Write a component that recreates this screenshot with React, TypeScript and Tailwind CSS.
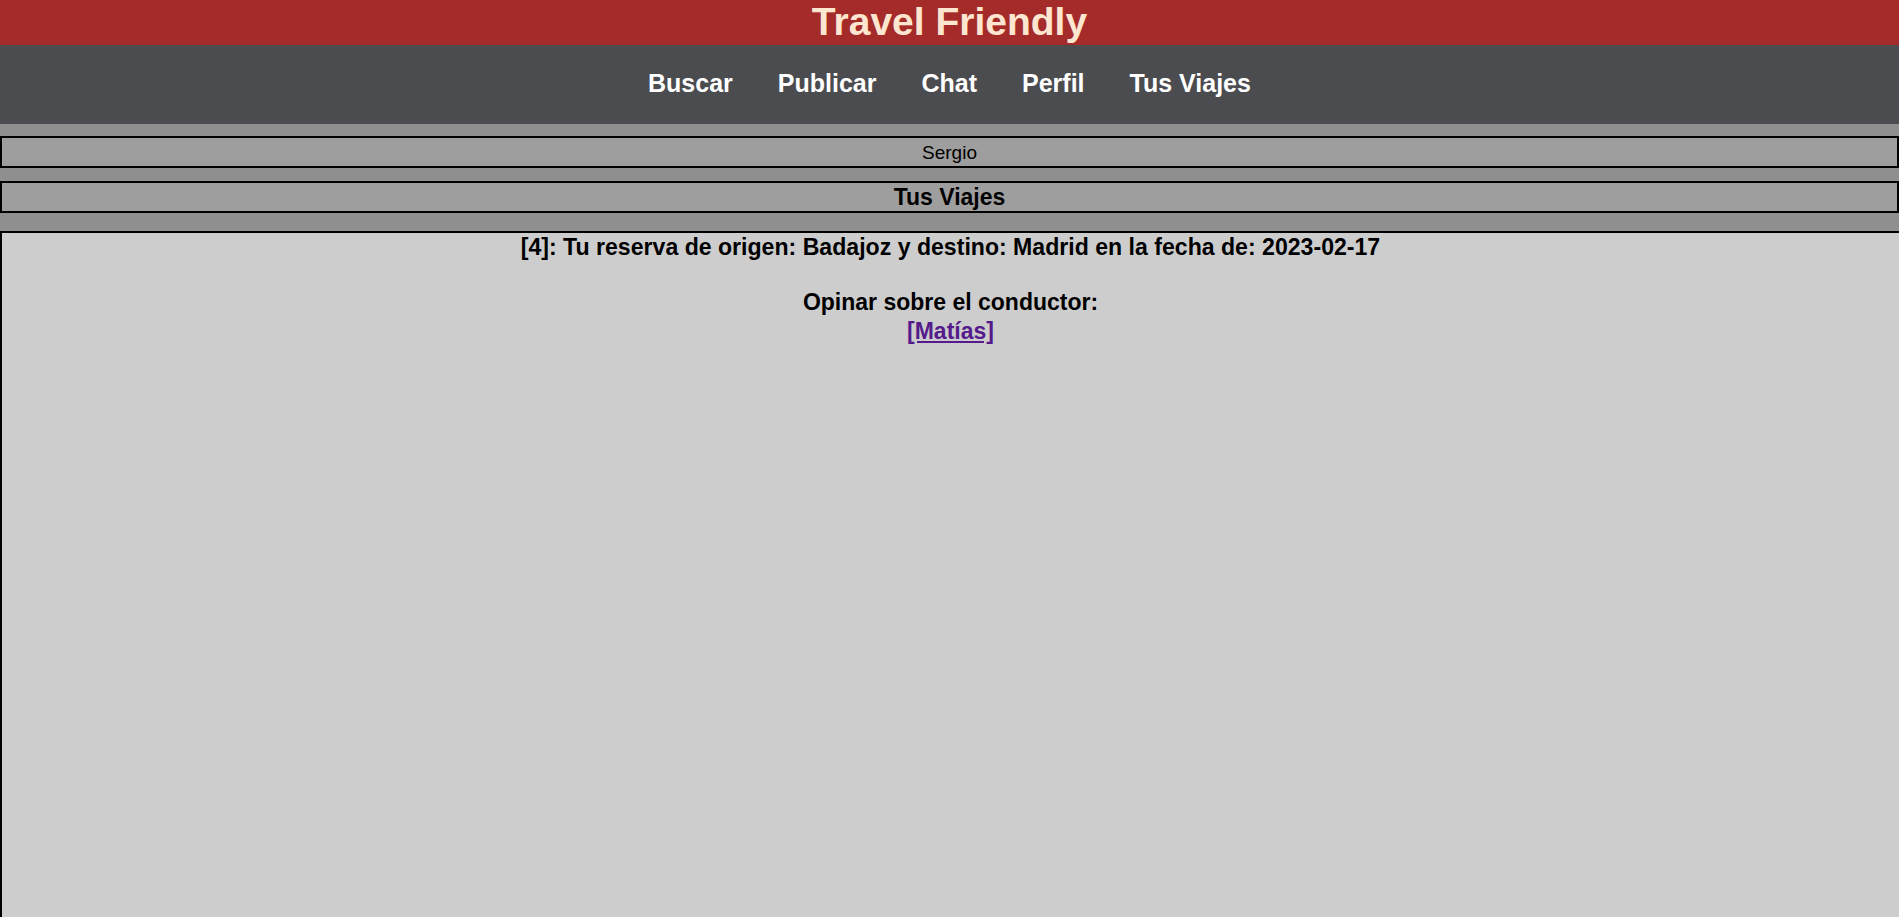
export default function App() {
  const links = ["Buscar", "Publicar", "Chat", "Perfil", "Tus Viajes"];

  return (
    <div className="h-[917px] flex flex-col overflow-hidden bg-[#8f8f8f] font-['Liberation_Sans',Arial,sans-serif] text-black">
      {/* Header */}
      <header className="h-[45px] bg-[#a52a2a] flex items-center justify-center pb-[2px]">
        <h1 className="text-[39px] leading-[43px] font-bold text-[#fde6cf]">Travel Friendly</h1>
      </header>

      {/* Nav */}
      <nav className="h-[79px] bg-[#4b4c50] flex items-center justify-center gap-[45px] pb-[2px]">
        {links.map((l) => (
          <a key={l} href="#" className="text-[25px] font-bold text-white no-underline">
            {l}
          </a>
        ))}
      </nav>

      <div className="mt-[12px] h-[32px] border-2 border-black bg-[#9e9e9e] flex items-center justify-center pt-[2px]">
        <span className="text-[19px]">Sergio</span>
      </div>

      <div className="mt-[13px] h-[32px] border-2 border-black bg-[#9e9e9e] flex items-center justify-center">
        <h2 className="text-[23px] font-bold">Tus Viajes</h2>
      </div>

      {/* Reservas */}
      <div className="mt-[18px] flex-1 border-l-2 border-t-2 border-black bg-[#cdcdcd] pt-[1px] text-center text-[23px] font-bold leading-[27px]">
        <p className="text-[23.1px]">[4]: Tu reserva de origen: Badajoz y destino: Madrid en la fecha de: 2023-02-17</p>
        <p className="mt-[28px]">Opinar sobre el conductor:</p>
        <div className="pt-[2px]">
          <a href="#" className="text-[#551a8b] underline">[Matías]</a>
        </div>
      </div>
    </div>
  );
}
